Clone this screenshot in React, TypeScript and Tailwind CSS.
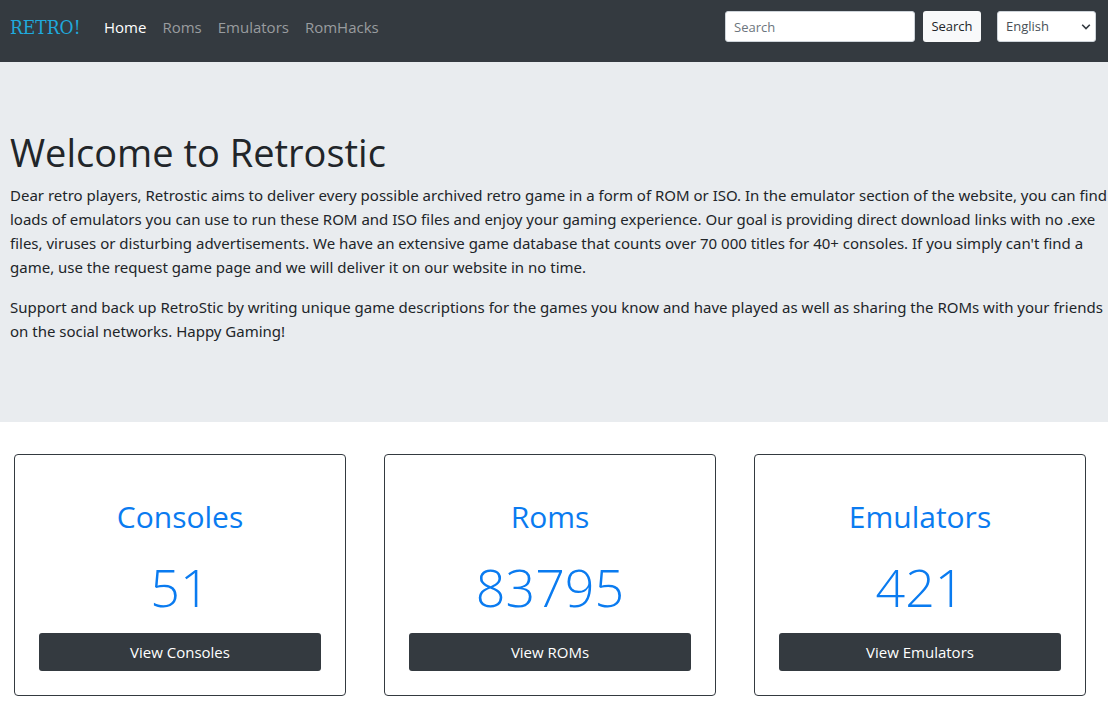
import { useState } from 'react';

const navLinks = ['Home', 'Roms', 'Emulators', 'RomHacks'];

const stats = [
    { title: 'Consoles', count: 51, action: 'View Consoles' },
    { title: 'Roms', count: 83795, action: 'View ROMs' },
    { title: 'Emulators', count: 421, action: 'View Emulators' },
];

function Navbar() {
    const [query, setQuery] = useState('');
    const [language, setLanguage] = useState('en');

    return (
        <nav className="flex items-start justify-between bg-[#343a40] pt-[11px] pb-[19px] pl-[10px] pr-3">
            <div className="flex items-center h-8">
                <a href="#" className="w-[70px] mr-4 text-[19px] leading-8 text-[#1fa9dc] font-['DejaVu_Serif_Condensed','DejaVu_Serif',serif]">
                    RETRO!
                </a>
                <ul className="flex">
                    {navLinks.map((link) => (
                        <li key={link}>
                            <a href="#" className={`block px-2 text-[15px] leading-6 ${link === 'Home' ? 'text-white' : 'text-[#999c9f] hover:text-gray-300'}`}>
                                {link}
                            </a>
                        </li>
                    ))}
                </ul>
            </div>
            <div className="flex items-center">
                <form className="flex gap-2 mr-4" onSubmit={(e) => e.preventDefault()}>
                    <input
                        type="search"
                        aria-label="Search"
                        placeholder="Search"
                        value={query}
                        onChange={(e) => setQuery(e.target.value)}
                        className="w-[190px] h-[31px] px-2 text-[13px] text-[#495057] placeholder:text-[#6c757d] bg-white border border-[#ced4da] rounded-[3px]"
                    />
                    <button type="submit" className="w-[58px] h-[31px] text-[13px] text-[#212529] bg-[#f8f9fa] rounded-[3px]">
                        Search
                    </button>
                </form>
                <div className="relative">
                    <select
                        aria-label="Language"
                        value={language}
                        onChange={(e) => setLanguage(e.target.value)}
                        className="appearance-none w-[99px] h-[31px] px-2 text-[13px] text-[#495057] bg-white border border-[#ced4da] rounded-[3px]"
                    >
                        <option value="en">English</option>
                        <option value="de">Deutsch</option>
                        <option value="fr">Français</option>
                    </select>
                    <svg viewBox="0 0 10 10" fill="none" stroke="#343a40" strokeWidth="1.6" className="absolute right-[5px] top-[11px] w-[10px] h-[10px] pointer-events-none">
                        <path d="M1.2 2.8L5 6.6L8.8 2.8" />
                    </svg>
                </div>
            </div>
        </nav>
    );
}

export default function App() {
    return (
        <div className="min-h-screen bg-white text-[#212529] font-['Open_Sans','Noto_Sans',sans-serif]">
            <Navbar />
            <header className="bg-[#e9ecef] pt-[67px] pb-[79px] pl-[10px]">
                <h1 className="mb-2 text-[38px] leading-[46px]">Welcome to Retrostic</h1>
                <div className="text-[15px] leading-6 font-['Noto_Sans','Open_Sans',sans-serif]">
                    <p className="mb-4">
                        Dear retro players, Retrostic aims to deliver every possible archived retro game in a form of ROM or ISO. In the emulator section of the website, you can find loads of emulators you can use to run these ROM and ISO files and enjoy your gaming experience. Our goal is providing direct download links with no .exe files, viruses or disturbing advertisements. We have an extensive game database that counts over 70 000 titles for 40+ consoles. If you simply can't find a game, use the request game page and we will deliver it on our website in no time.
                    </p>
                    <p>
                        Support and back up RetroStic by writing unique game descriptions for the games you know and have played as well as sharing the ROMs with your friends on the social networks. Happy Gaming!
                    </p>
                </div>
            </header>
            <main className="grid grid-cols-3 gap-[38px] pt-8 pb-5 pl-[14px] pr-[22px]">
                {stats.map((stat) => (
                    <section key={stat.title} className="border border-[#343a40] rounded px-6 pt-[42px] pb-6 text-center">
                        <h2 className="mb-4 text-[30px] leading-10 text-[#0a7bf0]">{stat.title}</h2>
                        <div className="mb-3 text-[52px] leading-[68px] font-light text-[#0a7bf0]">{stat.count}</div>
                        <button className="w-full h-[38px] rounded-[3px] bg-[#343a40] text-[15px] text-white hover:bg-[#23272b]">
                            {stat.action}
                        </button>
                    </section>
                ))}
            </main>
        </div>
    );
}
